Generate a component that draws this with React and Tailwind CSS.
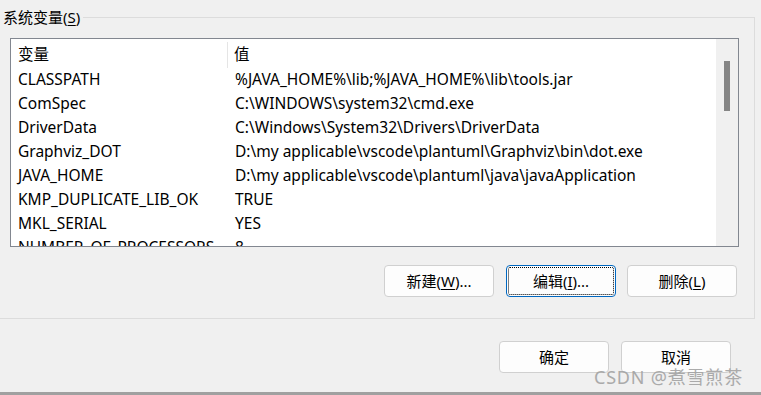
import React from 'react';

const rows = [
  ['CLASSPATH', '%JAVA_HOME%\\lib;%JAVA_HOME%\\lib\\tools.jar'],
  ['ComSpec', 'C:\\WINDOWS\\system32\\cmd.exe'],
  ['DriverData', 'C:\\Windows\\System32\\Drivers\\DriverData'],
  ['Graphviz_DOT', 'D:\\my applicable\\vscode\\plantuml\\Graphviz\\bin\\dot.exe'],
  ['JAVA_HOME', 'D:\\my applicable\\vscode\\plantuml\\java\\javaApplication'],
  ['KMP_DUPLICATE_LIB_OK', 'TRUE'],
  ['MKL_SERIAL', 'YES'],
  ['NUMBER_OF_PROCESSORS', '8'],
];

function WinButton({ children, focused, className = '' }) {
  return (
    <button
      className={`w-[110px] h-[32px] rounded-[4px] border bg-[#fdfdfd] text-[15px] text-black flex items-center justify-center ${
        focused
          ? 'border-[#0067c0] outline-1 outline-dotted outline-black outline-offset-[-3px]'
          : 'border-[#d0d0d0]'
      } ${className}`}
    >
      {children}
    </button>
  );
}

export default function App() {
  return (
    <div
      className="w-[761px] h-[395px] bg-[#f0f0f0] overflow-hidden relative text-black"
      style={{ fontFamily: '"Noto Sans", "Noto Sans CJK SC", sans-serif' }}
    >
      <div className="pt-[7px]">
        <fieldset className="w-[755px] h-[312px] border-t border-r border-b border-l-0 border-[#dcdcdc] p-0 m-0">
          <legend className="px-[3px] text-[15px] leading-[20px]">
            系统变量(<span className="underline underline-offset-2">S</span>)
          </legend>

          <div className="ml-[10px] mt-[11px] w-[729px] h-[209px] border border-[#828790] bg-white flex overflow-hidden">
            <div className="flex-1 flex flex-col text-[15.5px]">
              <div className="h-[29px] shrink-0 flex items-center pt-[3px]">
                <div className="w-[217px] h-[26px] flex items-center pl-[7px] border-r border-[#e5e5e5]">变量</div>
                <div className="pl-[6px]">值</div>
              </div>
              {rows.map(([name, value]) => (
                <div key={name} className="h-[24px] shrink-0 flex items-center whitespace-nowrap">
                  <div className="w-[218px] pl-[7px] overflow-hidden">{name}</div>
                  <div className="pl-[6px]">{value}</div>
                </div>
              ))}
            </div>
            <div className="w-[22px] h-full bg-[#f0f0f0] shrink-0 pt-[22px] pl-[8px]">
              <div className="w-[6px] h-[50px] bg-[#858585]" />
            </div>
          </div>

          <div className="flex mt-[18px] ml-[384px] gap-[11px]">
            <WinButton>
              新建(<span className="underline underline-offset-2">W</span>)...
            </WinButton>
            <WinButton focused className="ml-[1px]">
              编辑(<span className="underline underline-offset-2">I</span>)...
            </WinButton>
            <WinButton>
              删除(<span className="underline underline-offset-2">L</span>)
            </WinButton>
          </div>
        </fieldset>

        <div className="flex mt-[22px] ml-[499px] gap-[12px]">
          <WinButton>确定</WinButton>
          <WinButton>取消</WinButton>
        </div>

        <div className="mt-[19px] h-[3px] bg-[#a0a0a0]" />
      </div>

      <div className="absolute left-[594px] top-[364px] text-[18px] text-[#a3a3a3] opacity-90 tracking-[0.8px]">
        CSDN @煮雪煎茶
      </div>
    </div>
  );
}
